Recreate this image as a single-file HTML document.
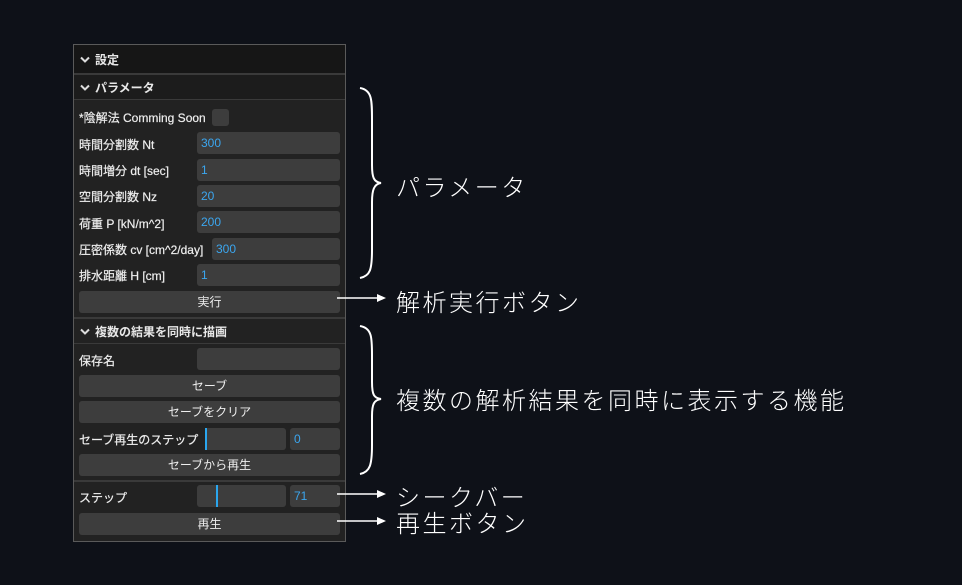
<!DOCTYPE html>
<html><head><meta charset="utf-8"><style>
*{margin:0;padding:0;box-sizing:border-box}
body{width:962px;height:585px;background:#0e1118;position:relative;overflow:hidden;font-family:"Liberation Sans","Noto Sans CJK JP",sans-serif;color:#e8e8e8}
.p{position:absolute;left:73px;top:44px;width:273px;height:498px;background:#222;border:1px solid #5a5a5a}
.a{position:absolute}
.hd{position:absolute;left:0;width:271px;font-size:12px;font-weight:bold;padding-left:6px;display:flex;align-items:center}
.hd svg{margin-right:5px}
.lb{position:absolute;left:5px;font-size:12px;color:#eee;-webkit-text-stroke:0.2px #eee}
.in{position:absolute;background:#3d3d3d;border-radius:3px;height:22px;font-size:12px;color:#3ba6ef;padding:4px 0 0 4px}
.bt{position:absolute;left:5px;width:261px;height:22px;background:#3d3d3d;border-radius:3px;font-size:12px;color:#eee;text-align:center;line-height:22px}
.sep{position:absolute;left:0;width:271px;height:2px;background:#3a3a3a}
.t{position:absolute;left:396px;font-size:24px;color:#fff;font-weight:300;white-space:nowrap;letter-spacing:2.5px}
</style></head><body>
<div class="p">
 <div class="hd" style="top:0;height:28px;background:#161616"><svg width="10" height="7"><path d="M1 1.5L5 5.5L9 1.5" stroke="#ddd" stroke-width="2" fill="none"/></svg>設定</div>
 <div class="sep" style="top:28px;background:#3a3a3a"></div>
 <div class="hd" style="top:30px;height:24px;background:#1c1c1c"><svg width="10" height="7"><path d="M1 1.5L5 5.5L9 1.5" stroke="#ddd" stroke-width="2" fill="none"/></svg>パラメータ</div>
 <div class="sep" style="top:54px;height:1px"></div>
 <div class="lb" style="top:64px">*陰解法 Comming Soon</div>
 <div class="in" style="left:138px;top:64px;width:17px;height:17px"></div>
 <div class="lb" style="top:91px">時間分割数 Nt</div><div class="in" style="left:123px;top:87px;width:143px">300</div>
 <div class="lb" style="top:117px">時間増分 dt [sec]</div><div class="in" style="left:123px;top:114px;width:143px">1</div>
 <div class="lb" style="top:143px">空間分割数 Nz</div><div class="in" style="left:123px;top:140px;width:143px">20</div>
 <div class="lb" style="top:170px">荷重 P [kN/m^2]</div><div class="in" style="left:123px;top:166px;width:143px">200</div>
 <div class="lb" style="top:196px">圧密係数 cv [cm^2/day]</div><div class="in" style="left:138px;top:193px;width:128px">300</div>
 <div class="lb" style="top:222px">排水距離 H [cm]</div><div class="in" style="left:123px;top:219px;width:143px">1</div>
 <div class="bt" style="top:246px">実行</div>
 <div class="sep" style="top:272px"></div>
 <div class="hd" style="top:274px;height:24px"><svg width="10" height="7"><path d="M1 1.5L5 5.5L9 1.5" stroke="#ddd" stroke-width="2" fill="none"/></svg>複数の結果を同時に描画</div>
 <div class="sep" style="top:298px;height:1px"></div>
 <div class="lb" style="top:307px">保存名</div><div class="in" style="left:123px;top:303px;width:143px"></div>
 <div class="bt" style="top:330px">セーブ</div>
 <div class="bt" style="top:356px">セーブをクリア</div>
 <div class="lb" style="top:386px">セーブ再生のステップ</div>
 <div class="in" style="left:131px;top:383px;width:81px"></div><div class="a" style="left:131px;top:383px;width:2px;height:22px;background:#2aa6ee"></div>
 <div class="in" style="left:216px;top:383px;width:50px">0</div>
 <div class="bt" style="top:409px">セーブから再生</div>
 <div class="sep" style="top:435px"></div>
 <div class="lb" style="top:444px">ステップ</div>
 <div class="in" style="left:123px;top:440px;width:89px"></div><div class="a" style="left:142px;top:440px;width:2px;height:22px;background:#2aa6ee"></div>
 <div class="in" style="left:216px;top:440px;width:50px">71</div>
 <div class="bt" style="top:468px">再生</div>
</div>
<svg class="a" style="left:0;top:0" width="962" height="585">
 <g stroke="#fff" stroke-width="2" fill="none">
  <path d="M360 88 C372 90 372 100 372 120 L372 165 C372 178 374 182 381 183 C374 184 372 190 372 202 L372 250 C372 270 370 276 360 278"/>
  <path d="M360 326 C372 328 372 338 372 355 L372 382 C372 395 374 398 381 399 C374 400 372 404 372 416 L372 445 C372 465 370 472 360 474"/>
  <path d="M337 298 H378 M337 494 H378 M337 521 H378" stroke-width="1.5"/>
 </g>
 <g fill="#fff"><path d="M386 298 L377 294 L377 302Z M386 494 L377 490 L377 498Z M386 521 L377 517 L377 525Z"/></g>
</svg>
<div class="t" style="top:168px">パラメータ</div>
<div class="t" style="top:283px">解析実行ボタン</div>
<div class="t" style="top:381px">複数の解析結果を同時に表示する機能</div>
<div class="t" style="top:478px">シークバー</div>
<div class="t" style="top:504px">再生ボタン</div>
</body></html>
